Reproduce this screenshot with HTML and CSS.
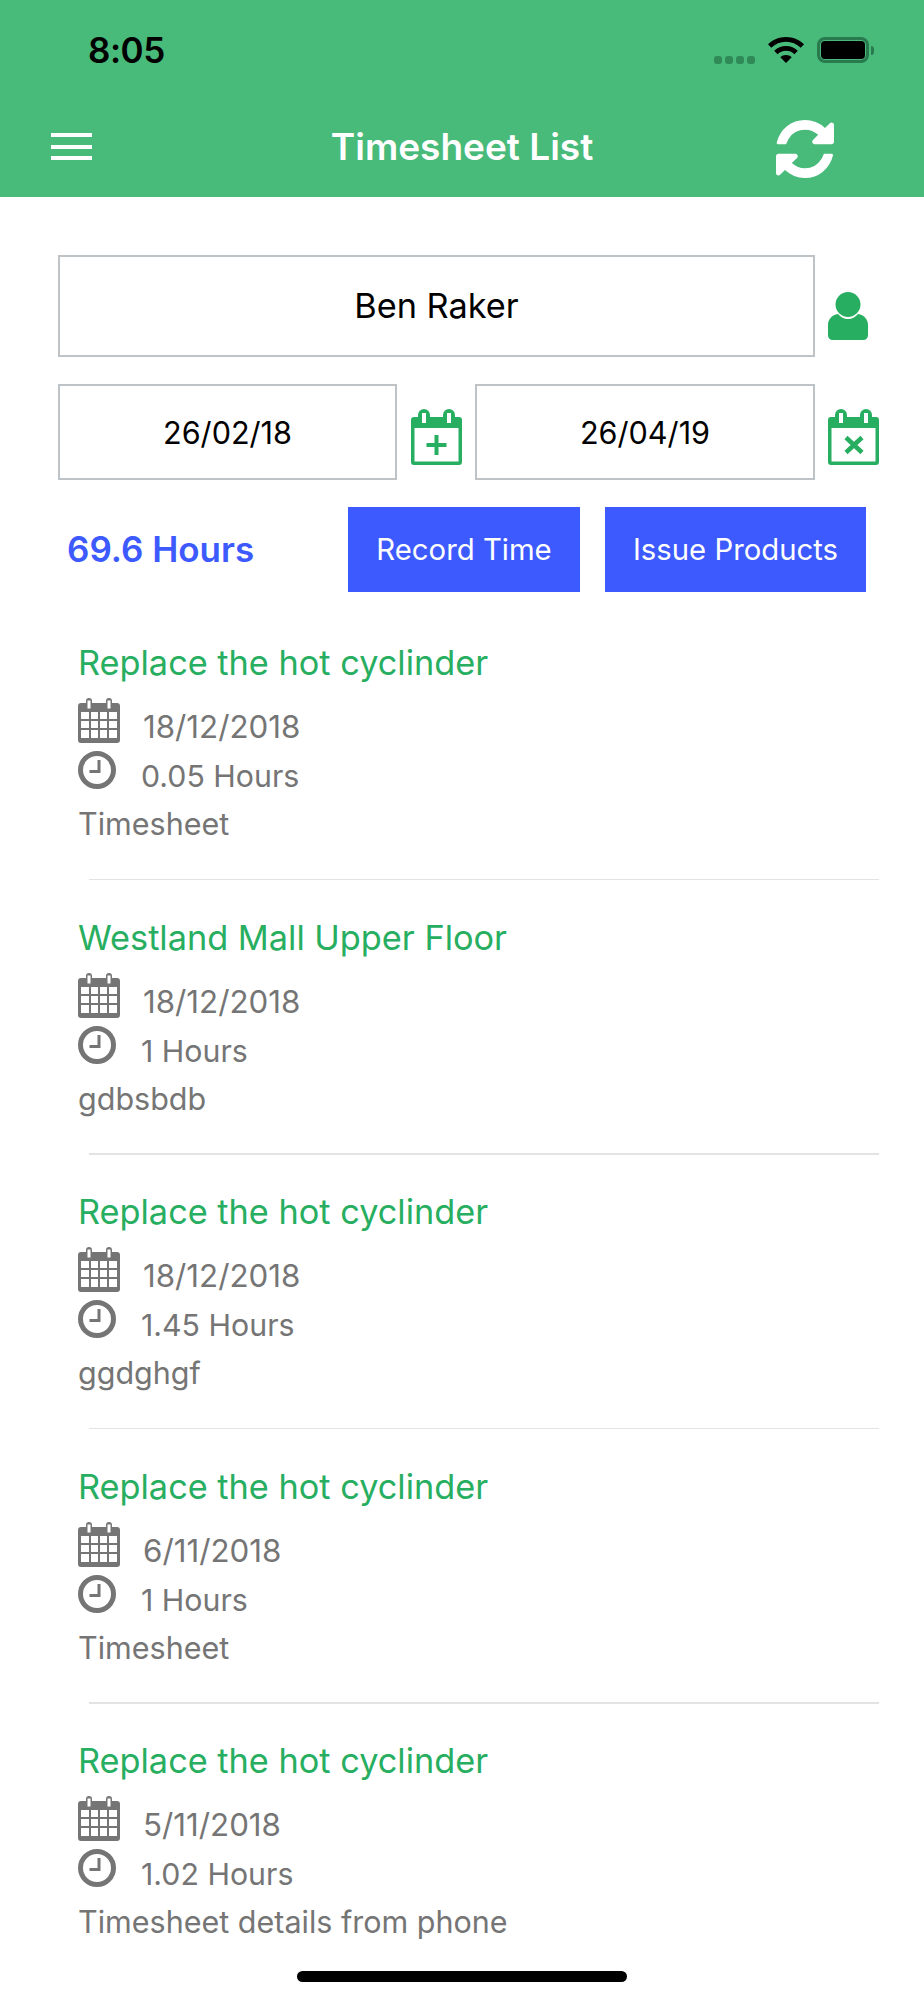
FILE: index.html
```html
<!DOCTYPE html>
<html lang="en">
<head>
<meta charset="utf-8">
<meta name="viewport" content="width=device-width, initial-scale=1.0">
<title>Timesheet List</title>
<link rel="stylesheet" href="styles.css">
</head>
<body>
<svg class="defs" width="0" height="0">
<symbol id="cal" viewBox="0 0 42 45">
<path fill="#757575" d="M3 5h5V3a3 3 0 0 1 6 0v2h14V3a3 3 0 0 1 6 0v2h5a3 3 0 0 1 3 3v34a3 3 0 0 1-3 3H3a3 3 0 0 1-3-3V8a3 3 0 0 1 3-3z"/>
<path fill="#fff" d="M9.500 2.500h3v8h-3zM29.500 2.500h3v8h-3zM3 14h8v7H3zM13 14h7v7h-7zM22 14h7v7h-7zM31 14h8v7h-8zM3 23h8v7H3zM13 23h7v7h-7zM22 23h7v7h-7zM31 23h8v7h-8zM3 32h8v8H3zM13 32h7v8h-7zM22 32h7v8h-7zM31 32h8v8h-8z"/>
</symbol>
<symbol id="clock" viewBox="0 0 38 38">
<circle cx="19" cy="19" r="16.500" fill="none" stroke="#757575" stroke-width="5"/>
<path fill="#757575" d="M19.500 9h3v13h-11v-3h8z"/>
</symbol>
<symbol id="cal-green" viewBox="0 0 51 56">
<path fill="#27ae60" d="M3 8h4V6a6 6 0 0 1 12 0v2h13V6a6 6 0 0 1 12 0v2h4a3 3 0 0 1 3 3v42a3 3 0 0 1-3 3H3a3 3 0 0 1-3-3V11a3 3 0 0 1 3-3z"/>
<path fill="#fff" d="M11 4h4v10h-4zM36 4h4v10h-4zM3.500 19h44v33.500h-44z"/>
</symbol>
</svg>

<header class="top">
<div class="status">
<span class="clock-text">8:05</span>
<div class="status-icons">
<div class="signal"><i></i><i></i><i></i><i></i></div>
<svg class="wifi" viewBox="0 0 36 26"><path d="M18 0c7 0 13.500 2.800 18 7.300l-3.300 3.500A20.800 20.800 0 0 0 18 4.800 20.800 20.800 0 0 0 3.300 10.800L0 7.300C4.500 2.800 11 0 18 0z"/><path d="M18 9c4.600 0 8.700 1.800 11.800 4.700l-3.300 3.500A12.200 12.200 0 0 0 18 13.800c-3.300 0-6.300 1.300-8.500 3.400l-3.300-3.500C9.300 10.800 13.400 9 18 9z"/><path d="M18 18c2.200 0 4.200.8 5.700 2.200L18 26l-5.700-5.800c1.500-1.400 3.500-2.200 5.700-2.200z"/></svg>
<div class="battery"><div class="battery-fill"></div></div>
<div class="battery-nub"></div>
</div>
</div>
<nav class="nav">
<div class="burger"><i></i><i></i><i></i></div>
<h1 class="nav-title">Timesheet List</h1>
<div class="nav-right">
<svg class="refresh" viewBox="0 128 1536 1536"><path fill="#fff" d="M1511 1056q0 5-1 7-64 268-268 434.500t-478 166.500q-146 0-282.500-55t-243.500-157l-129 129q-19 19-45 19t-45-19-19-45v-448q0-26 19-45t45-19h448q26 0 45 19t19 45-19 45l-137 137q71 66 161 102t187 36q134 0 250-65t186-179q11-17 53-117 8-23 30-23h192q13 0 22.500 9.500t9.500 22.500zm25-800v448q0 26-19 45t-45 19h-448q-26 0-45-19t-19-45 19-45l138-138q-148-137-349-137-134 0-250 65t-186 179q-11 17-53 117-8 23-30 23h-199q-13 0-22.500-9.500t-9.500-22.500v-7q65-268 270-434.500t480-166.500q146 0 284 55.500t245 156.500l130-129q19-19 45-19t45 19 19 45z"/></svg>
</div>
</nav>
</header>

<main class="filters">
<div class="line">
<div class="box box-name">Ben Raker</div>
<svg class="person" viewBox="0 0 40 48"><ellipse cx="20" cy="12.500" rx="12.500" ry="12.500" fill="#27ae60"/><path fill="#27ae60" d="M10 22c2.500 3 6 5 10 5s7.500-2 10-5c6 1 10 5 10 11v10c0 3-2 5-5 5H5c-3 0-5-2-5-5V33c0-6 4-10 10-11z"/></svg>
</div>
<div class="line line-dates">
<div class="box box-date box-from">26/02/18</div>
<svg class="cal-green" viewBox="0 0 51 56"><use href="#cal-green"/><path fill="#27ae60" d="M23.500 26h4v8h8v4h-8v8h-4v-8h-8v-4h8z"/></svg>
<div class="box box-date">26/04/19</div>
<svg class="cal-green" viewBox="0 0 51 56"><use href="#cal-green"/><path fill="none" stroke="#27ae60" stroke-width="4.500" d="M18 28.500l16 15M34 28.500L18 43.500"/></svg>
</div>
<div class="line line-actions">
<span class="total">69.6 Hours</span>
<button class="btn btn-record">Record Time</button>
<button class="btn btn-issue">Issue Products</button>
</div>
</main>

<section class="list">
<article class="row">
<h2 class="row-title">Replace the hot cyclinder</h2>
<div class="meta"><svg class="ic-cal"><use href="#cal"/></svg><span class="meta-date">18/12/2018</span></div>
<div class="meta"><svg class="ic-clock"><use href="#clock"/></svg><span class="meta-hours">0.05 Hours</span></div>
<p class="note">Timesheet</p>
</article>
<article class="row">
<h2 class="row-title">Westland Mall Upper Floor</h2>
<div class="meta"><svg class="ic-cal"><use href="#cal"/></svg><span class="meta-date">18/12/2018</span></div>
<div class="meta"><svg class="ic-clock"><use href="#clock"/></svg><span class="meta-hours">1 Hours</span></div>
<p class="note">gdbsbdb</p>
</article>
<article class="row">
<h2 class="row-title">Replace the hot cyclinder</h2>
<div class="meta"><svg class="ic-cal"><use href="#cal"/></svg><span class="meta-date">18/12/2018</span></div>
<div class="meta"><svg class="ic-clock"><use href="#clock"/></svg><span class="meta-hours">1.45 Hours</span></div>
<p class="note">ggdghgf</p>
</article>
<article class="row">
<h2 class="row-title">Replace the hot cyclinder</h2>
<div class="meta"><svg class="ic-cal"><use href="#cal"/></svg><span class="meta-date">6/11/2018</span></div>
<div class="meta"><svg class="ic-clock"><use href="#clock"/></svg><span class="meta-hours">1 Hours</span></div>
<p class="note">Timesheet</p>
</article>
<article class="row row-last">
<h2 class="row-title">Replace the hot cyclinder</h2>
<div class="meta"><svg class="ic-cal"><use href="#cal"/></svg><span class="meta-date">5/11/2018</span></div>
<div class="meta"><svg class="ic-clock"><use href="#clock"/></svg><span class="meta-hours">1.02 Hours</span></div>
<p class="note">Timesheet details from phone</p>
</article>
</section>

<div class="home-bar"></div>
</body>
</html>
```

FILE: styles.css
```css
html, body {
margin: 0;
padding: 0;
}
body {
position: relative;
width: 924px;
height: 2000px;
overflow: hidden;
background: #fff;
font-family: Inter, "Liberation Sans", sans-serif;
}
.defs {
position: absolute;
}

/* header */
.top {
height: 197px;
background: #48ba7a;
}
.status {
display: flex;
justify-content: space-between;
height: 100px;
padding: 0 50px 0 88px;
}
.clock-text {
margin-top: 30px;
font-size: 35px;
line-height: 41px;
font-weight: 600;
letter-spacing: -0.5px;
color: #000;
}
.status-icons {
display: flex;
align-items: flex-start;
padding-top: 37px;
}
.signal {
display: flex;
gap: 3px;
margin: 19px 13px 0 0;
}
.signal i {
width: 8px;
height: 8px;
border-radius: 3px;
background: #2f8a58;
}
.wifi {
width: 36px;
height: 26px;
margin-right: 13px;
}
.battery {
box-sizing: border-box;
width: 52px;
height: 26px;
padding: 1px;
border: 3px solid #2a7a50;
border-radius: 8px;
}
.battery-fill {
height: 100%;
border-radius: 4px;
background: #000;
}
.battery-nub {
width: 3px;
height: 9px;
margin: 9px 0 0 2px;
border-radius: 0 3px 3px 0;
background: #2a7a50;
}
.nav {
display: grid;
grid-template-columns: 1fr auto 1fr;
align-items: center;
height: 97px;
}
.burger {
display: flex;
flex-direction: column;
gap: 7.500px;
width: 41px;
margin: -4px 0 0 51px;
}
.burger i {
height: 4px;
background: #fff;
}
.nav-title {
margin: -3px 0 0;
font-size: 37px;
line-height: 44px;
font-weight: 600;
color: #fff;
}
.nav-right {
display: flex;
justify-content: flex-end;
padding-right: 90px;
}
.refresh {
width: 58px;
height: 58px;
}

/* filters */
.filters {
padding: 58px 0 0 58px;
}
.line {
display: flex;
align-items: flex-start;
}
.box {
box-sizing: border-box;
display: flex;
align-items: center;
justify-content: center;
border: 2.500px solid #bdc3c7;
color: #000;
}
.box-name {
width: 757px;
height: 102px;
padding-bottom: 2px;
font-size: 34.300px;
}
.person {
width: 40px;
height: 48px;
margin: 37px 0 0 13px;
}
.line-dates {
margin-top: 27px;
}
.box-date {
width: 340px;
height: 96px;
font-size: 30.600px;
}
.box-from {
width: 339px;
margin-right: 1px;
}
.cal-green {
width: 51px;
height: 56px;
margin: 25px 13px 0 13px;
}
.line-actions {
align-items: center;
margin-top: 27px;
padding-left: 9px;
}
.total {
width: 281px;
margin-top: -1px;
font-size: 35px;
font-weight: 600;
color: #3d5afe;
}
.btn {
height: 85px;
padding: 0;
border: 0;
background: #3d5afe;
color: #fff;
font-family: inherit;
font-size: 29.300px;
}
.btn-record {
width: 232px;
}
.btn-issue {
width: 261px;
margin-left: 25px;
}

/* list */
.list {
margin-top: 49px;
padding: 0 45px 0 78px;
}
.row {
display: flex;
flex-direction: column;
height: 239.100px;
margin-bottom: 35.500px;
}
.row::after {
content: "";
height: 1.600px;
margin: auto 0 0 11px;
background: #e3e3e3;
}
.row-last::after {
display: none;
}
.row-title {
margin: 0;
font-size: 34.300px;
line-height: 44px;
font-weight: 400;
color: #27ae60;
}
.meta {
display: flex;
align-items: flex-start;
color: #757575;
font-size: 30.300px;
line-height: 36px;
}
.ic-cal {
width: 42px;
height: 45px;
margin-top: 13px;
}
.ic-clock {
width: 38px;
height: 38px;
margin-top: 6px;
}
.meta-date {
margin: 24px 0 0 23px;
font-size: 31.300px;
}
.meta-hours {
margin: 13px 0 0 25px;
}
.note {
margin: 12px 0 0;
font-size: 30.500px;
line-height: 36px;
color: #757575;
}

.home-bar {
position: absolute;
left: 297px;
top: 1971px;
width: 330px;
height: 11px;
border-radius: 6px;
background: #000;
}
```
